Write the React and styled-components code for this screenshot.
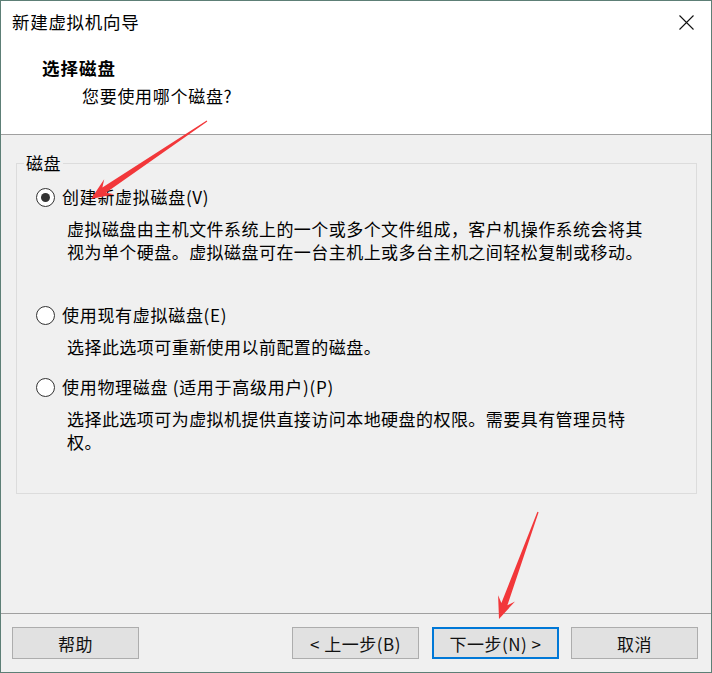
import React from "react";
import styled, { createGlobalStyle } from "styled-components";

const GlobalStyle = createGlobalStyle`
  html, body {
    margin: 0;
    padding: 0;
    background: #ffffff;
  }
  body {
    font-family: "Noto Sans CJK SC", "Noto Sans", sans-serif;
    color: #000;
  }
`;

const options = [
  {
    label: "创建新虚拟磁盘(V)",
    checked: true,
    lines: [
      "虚拟磁盘由主机文件系统上的一个或多个文件组成，客户机操作系统会将其",
      "视为单个硬盘。虚拟磁盘可在一台主机上或多台主机之间轻松复制或移动。",
    ],
    after: 40,
  },
  {
    label: "使用现有虚拟磁盘(E)",
    lines: ["选择此选项可重新使用以前配置的磁盘。"],
    after: 17,
  },
  {
    label: "使用物理磁盘 (适用于高级用户)(P)",
    lines: [
      "选择此选项可为虚拟机提供直接访问本地硬盘的权限。需要具有管理员特",
      "权。",
    ],
    after: 0,
  },
];

// red annotation arrows, tail -> tip
const arrows = [
  { from: [207, 121], to: [91, 199] },
  { from: [538, 512], to: [499, 619] },
];

function arrowPoints([tx, ty], [px, py]) {
  const dx = px - tx;
  const dy = py - ty;
  const len = Math.hypot(dx, dy);
  const ux = dx / len;
  const uy = dy / len;
  const nx = -uy;
  const ny = ux;
  const head = 22;
  const barb = 9;
  const neck = 3.2;
  const tail = 0.6;
  const nBase = [px - ux * head * 0.72, py - uy * head * 0.72];
  const bBase = [px - ux * head, py - uy * head];
  const pts = [
    [tx + nx * tail, ty + ny * tail],
    [nBase[0] + nx * neck, nBase[1] + ny * neck],
    [bBase[0] + nx * barb, bBase[1] + ny * barb],
    [px, py],
    [bBase[0] - nx * barb, bBase[1] - ny * barb],
    [nBase[0] - nx * neck, nBase[1] - ny * neck],
    [tx - nx * tail, ty - ny * tail],
  ];
  return pts.map((p) => p.map((v) => v.toFixed(1)).join(",")).join(" ");
}

const App = () => {
  return (
    <>
      <GlobalStyle />
      <Window>
        <TitleBar>
          <TitleText>新建虚拟机向导</TitleText>
          <CloseButton>
            <svg width="15" height="15" viewBox="0 0 15 15">
              <path d="M0.5 0.5 L14.5 14.5 M14.5 0.5 L0.5 14.5" stroke="#111" strokeWidth="1.1" fill="none" />
            </svg>
          </CloseButton>
        </TitleBar>

        <Header>
          <HeaderTitle>选择磁盘</HeaderTitle>
          <HeaderSub>您要使用哪个磁盘?</HeaderSub>
        </Header>

        <Body>
          <GroupBox>
            <Legend>磁盘</Legend>
            <GroupContent>
              {options.map((opt, i) => (
                <Option key={i} $after={opt.after}>
                  <RadioRow>
                    <Radio $checked={opt.checked} />
                    <RadioLabel>{opt.label}</RadioLabel>
                  </RadioRow>
                  <Desc>
                    {opt.lines.map((line, j) => (
                      <DescLine key={j}>{line}</DescLine>
                    ))}
                  </Desc>
                </Option>
              ))}
            </GroupContent>
          </GroupBox>
        </Body>

        <Footer>
          <Button>帮助</Button>
          <Spacer />
          <Button>&lt; 上一步(B)</Button>
          <Button $primary>下一步(N) &gt;</Button>
          <Button>取消</Button>
        </Footer>

        <Overlay width="712" height="673" viewBox="0 0 712 673">
          {arrows.map((a, i) => (
            <polygon key={i} points={arrowPoints(a.from, a.to)} fill="#f2373a" />
          ))}
        </Overlay>
      </Window>
    </>
  );
};

const Window = styled.div`
  position: relative;
  width: 712px;
  height: 673px;
  box-sizing: border-box;
  border: 1px solid #5d7f76;
  display: flex;
  flex-direction: column;
  background: #f0f0f0;
  overflow: hidden;
`;

const TitleBar = styled.div`
  height: 42px;
  flex-shrink: 0;
  background: #ffffff;
  display: flex;
  align-items: center;
  justify-content: space-between;
  padding: 0 17px 0 11px;
`;

const TitleText = styled.div`
  font-size: 17.5px;
  letter-spacing: 0.7px;
  line-height: 24px;
`;

const CloseButton = styled.div`
  width: 15px;
  height: 15px;
  display: flex;
`;

const Header = styled.div`
  background: #ffffff;
  padding: 13px 0 26px 41px;
  border-bottom: 1px solid #a0a0a0;
`;

const HeaderTitle = styled.div`
  font-size: 17.5px;
  font-weight: 700;
  line-height: 24px;
  letter-spacing: 1px;
`;

const HeaderSub = styled.div`
  margin: 4px 0 0 40px;
  font-size: 17px;
  letter-spacing: 0.7px;
  line-height: 24px;
`;

const Body = styled.div`
  flex: 1;
  padding: 18px 14px 0 15px;
`;

const GroupBox = styled.fieldset`
  margin: 0;
  padding: 0 0 40px;
  border: 1px solid #dcdcdc;
  min-width: 0;
`;

const Legend = styled.legend`
  margin-left: 7px;
  padding: 0 2px;
  font-size: 17px;
  line-height: 20px;
  letter-spacing: 0.5px;
`;

const GroupContent = styled.div`
  padding: 12px 0 0 19px;
`;

const Option = styled.div`
  margin-bottom: ${(p) => p.$after}px;
`;

const RadioRow = styled.div`
  display: flex;
  align-items: center;
  height: 24px;
`;

const Radio = styled.span`
  box-sizing: border-box;
  width: 19px;
  height: 19px;
  border-radius: 50%;
  border: 1.5px solid #333;
  background: #fff;
  display: flex;
  align-items: center;
  justify-content: center;
  margin-right: 7px;

  &::after {
    content: "";
    width: 9px;
    height: 9px;
    border-radius: 50%;
    background: #333;
    display: ${(p) => (p.$checked ? "block" : "none")};
  }
`;

const RadioLabel = styled.span`
  font-size: 17px;
  letter-spacing: 0.7px;
  line-height: 24px;
`;

const Desc = styled.div`
  margin: 8px 0 0 31px;
`;

const DescLine = styled.div`
  font-size: 17px;
  letter-spacing: 0.45px;
  line-height: 23px;
  white-space: nowrap;
`;

const Footer = styled.div`
  flex-shrink: 0;
  border-top: 1px solid #a0a0a0;
  padding: 13px 13px 13px 11px;
  display: flex;
  gap: 13px;
`;

const Spacer = styled.div`
  flex: 1;
`;

const Button = styled.button`
  width: 127px;
  height: 32px;
  box-sizing: border-box;
  background: #e1e1e1;
  border: ${(p) => (p.$primary ? "2px solid #0078d7" : "1px solid #adadad")};
  font-family: "Noto Sans CJK SC", "Noto Sans", sans-serif;
  font-size: 17px;
  letter-spacing: 0.5px;
  color: #111;
  padding: 0;
  display: flex;
  align-items: center;
  justify-content: center;
  margin-right: ${(p) => (p.$primary ? "-1px" : "0")};
`;

const Overlay = styled.svg`
  position: absolute;
  top: -1px;
  left: -1px;
  pointer-events: none;
`;

export default App;
